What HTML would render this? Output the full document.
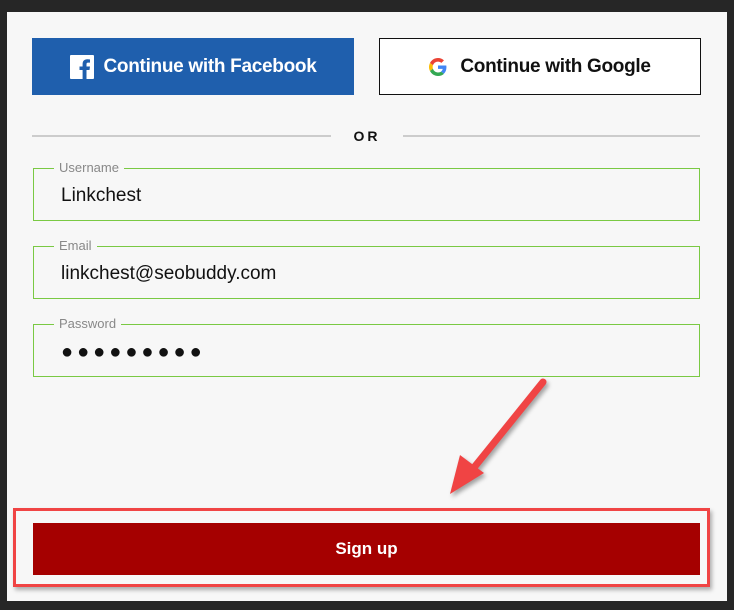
<!DOCTYPE html>
<html><head><style>
body{margin:0;width:734px;height:610px;background:#262626;position:relative;overflow:hidden;font-family:"Liberation Sans",sans-serif}
.panel{position:absolute;left:7px;top:12px;width:720px;height:589px;background:#f7f7f7}
.fb{position:absolute;left:32px;top:38px;width:322px;height:57px;background:#1f5fad;color:#fff;font-weight:bold;font-size:19px;display:flex;align-items:center;justify-content:center;letter-spacing:-0.3px}
.gg{position:absolute;left:379px;top:38px;width:320px;height:55px;border:1px solid #111;background:#fff;color:#111;font-weight:bold;font-size:19px;display:flex;align-items:center;justify-content:center;letter-spacing:-0.3px}
.line{position:absolute;top:135px;height:2px;background:#ccc}
.or{position:absolute;left:344px;top:128px;width:46px;text-align:center;font-size:14px;font-weight:bold;letter-spacing:3px;color:#111}
.fs{position:absolute;left:33px;width:665px;height:51px;border:1px solid #7ac943;box-sizing:content-box}
.fs .lb{position:absolute;left:20px;top:-9px;background:#f7f7f7;padding:0 5px;font-size:13px;color:#888}
.fs .v{position:absolute;left:27px;top:16px;font-size:19px;color:#111}
.outline{position:absolute;left:13px;top:508px;width:691px;height:73px;border:3px solid #f04444;box-shadow:2px 3px 4px rgba(0,0,0,.3)}
.btn{position:absolute;left:33px;top:523px;width:667px;height:52px;background:#a50000;color:#fff;font-weight:bold;font-size:17px;display:flex;align-items:center;justify-content:center}
</style></head><body>
<div class="panel"></div>
<div class="fb"><svg width="24" height="24" viewBox="0 0 24 24" style="margin-right:10px"><rect width="24" height="24" rx="1" fill="#fff"/><path d="M16.5 24V15h3l.5-3.5h-3.5V9.3c0-1 .3-1.7 1.8-1.7H20V4.5c-.4 0-1.5-.2-2.8-.2-2.8 0-4.6 1.7-4.6 4.8v2.4H9.5V15h3.1v9z" fill="#1f5fad"/></svg>Continue with Facebook</div>
<div class="gg"><svg width="18" height="18" viewBox="0 0 48 48" style="margin-right:13px"><path fill="#EA4335" d="M24 9.5c3.5 0 6.6 1.2 9.1 3.6l6.8-6.8C35.8 2.4 30.3 0 24 0 14.6 0 6.6 5.4 2.6 13.2l7.9 6.2C12.4 13.7 17.7 9.5 24 9.5z"/><path fill="#4285F4" d="M46.5 24.5c0-1.6-.1-3.1-.4-4.5H24v9h12.6c-.5 2.9-2.2 5.4-4.7 7.1l7.7 6C44 38 46.5 31.8 46.5 24.5z"/><path fill="#FBBC05" d="M10.5 28.6c-.5-1.4-.8-3-.8-4.6s.3-3.2.8-4.6l-7.9-6.2C.9 16.5 0 20.1 0 24s.9 7.5 2.6 10.8z"/><path fill="#34A853" d="M24 48c6.5 0 11.9-2.1 15.9-5.8l-7.7-6c-2.1 1.5-4.9 2.3-8.2 2.3-6.3 0-11.6-4.2-13.5-9.9l-7.9 6.2C6.6 42.6 14.6 48 24 48z"/></svg>Continue with Google</div>
<div class="line" style="left:32px;width:299px"></div>
<div class="line" style="left:403px;width:297px"></div>
<div class="or">OR</div>
<div class="fs" style="top:168px"><span class="lb">Username</span><span class="v">Linkchest</span></div>
<div class="fs" style="top:246px"><span class="lb">Email</span><span class="v">linkchest@seobuddy.com</span></div>
<div class="fs" style="top:324px"><span class="lb">Password</span><span class="v" style="letter-spacing:4px;font-size:20px">●●●●●●●●●</span></div>
<div class="outline"></div>
<div class="btn">Sign up</div>
<svg style="position:absolute;left:0;top:0" width="734" height="610"><g filter="drop-shadow(2px 3px 2px rgba(0,0,0,.35))"><line x1="543" y1="382" x2="472" y2="470" stroke="#f04444" stroke-width="7" stroke-linecap="round"/><polygon points="450,494 460,455 484,473" fill="#f04444"/></g></svg>
</body></html>
